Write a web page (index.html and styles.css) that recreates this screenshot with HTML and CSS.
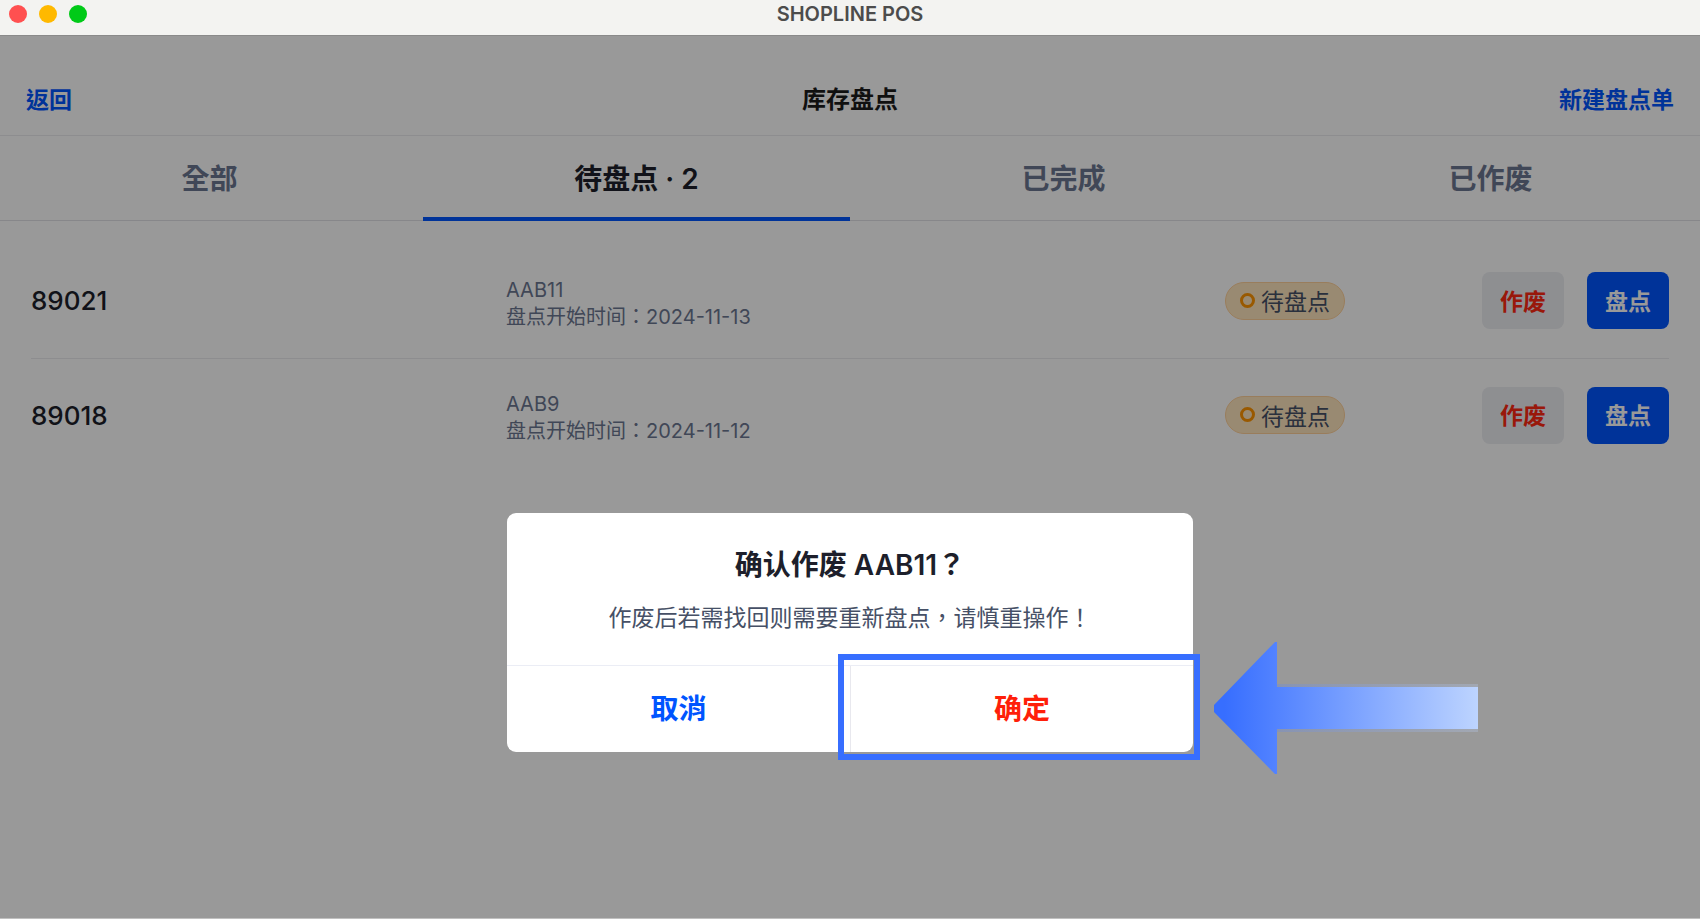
FILE: index.html
```html
<!DOCTYPE html>
<html lang="zh-Hant">
<head>
    <meta charset="UTF-8">
    <meta name="viewport" content="width=device-width, initial-scale=1.0">
    <link rel="stylesheet" href="styles.css">
    <title>SHOPLINE POS</title>
</head>
<body>
    <div class="titlebar">
        <div class="lights">
            <span class="light red"></span>
            <span class="light yellow"></span>
            <span class="light green"></span>
        </div>
        <span class="window-title">SHOPLINE POS</span>
    </div>

    <div class="app">
        <header class="header">
            <a href="#" class="header-link">返回</a>
            <h1>库存盘点</h1>
            <a href="#" class="header-link new">新建盘点单</a>
        </header>

        <nav class="tabs">
            <button type="button" class="tab">全部</button>
            <button type="button" class="tab active">待盘点 · 2</button>
            <button type="button" class="tab">已完成</button>
            <button type="button" class="tab">已作废</button>
        </nav>

        <main class="list">
            <table>
                <colgroup>
                    <col class="col-number">
                    <col>
                    <col class="col-status">
                    <col class="col-actions">
                </colgroup>
                <tr>
                    <td class="number">89021</td>
                    <td class="detail">AAB11<br>盘点开始时间：2024-11-13</td>
                    <td><span class="badge">待盘点</span></td>
                    <td>
                        <div class="actions">
                            <button type="button" class="btn btn-void">作废</button>
                            <button type="button" class="btn btn-count">盘点</button>
                        </div>
                    </td>
                </tr>
                <tr>
                    <td class="number">89018</td>
                    <td class="detail">AAB9<br>盘点开始时间：2024-11-12</td>
                    <td><span class="badge">待盘点</span></td>
                    <td>
                        <div class="actions">
                            <button type="button" class="btn btn-void">作废</button>
                            <button type="button" class="btn btn-count">盘点</button>
                        </div>
                    </td>
                </tr>
            </table>
        </main>

        <div class="overlay">
            <div class="modal" role="dialog" aria-labelledby="modal-title">
                <div class="modal-body">
                    <h2 id="modal-title">确认作废 AAB11？</h2>
                    <p>作废后若需找回则需要重新盘点，请慎重操作！</p>
                </div>
                <div class="modal-footer">
                    <button type="button" class="modal-btn cancel">取消</button>
                    <div class="confirm-wrap">
                        <button type="button" class="modal-btn confirm">确定</button>
                        <span class="highlight"></span>
                        <svg class="arrow" width="264" height="132" viewBox="0 0 264 132" aria-hidden="true">
                            <defs>
                                <linearGradient id="arrow-fill" gradientUnits="userSpaceOnUse" x1="0" y1="0" x2="264" y2="0">
                                    <stop offset="0.04" stop-color="#376eff"/>
                                    <stop offset="1" stop-color="#bdd4ff"/>
                                </linearGradient>
                            </defs>
                            <rect x="63" y="42" width="201" height="48" fill="url(#arrow-fill)" opacity="0.25"/>
                            <path d="M0 63 L61 0 H63 V45 H264 V87 H63 V132 H61 L0 70 Z" fill="url(#arrow-fill)"/>
                        </svg>
                    </div>
                </div>
            </div>
        </div>
    </div>
</body>
</html>
```
FILE: styles.css
```css
*,
*::before,
*::after {
    box-sizing: border-box;
}

body {
    margin: 0;
    min-height: 100vh;
    display: flex;
    flex-direction: column;
    font-family: Inter, "Noto Sans CJK TC", sans-serif;
    background-color: #fff;
    color: #1d1f2b;
}

button {
    font-family: inherit;
    border: none;
    padding: 0 0 2px;
    background: none;
    cursor: pointer;
}

/* window bar */
.titlebar {
    display: grid;
    grid-template-columns: 1fr auto 1fr;
    align-items: center;
    height: 35px;
    padding: 0 9px 8px;
    background-color: #f3f3f1;
}

.lights {
    display: flex;
    gap: 12px;
}

.light {
    width: 18px;
    height: 18px;
    border-radius: 50%;
}

.red {
    background-color: #ff5050;
}

.yellow {
    background-color: #ffb900;
}

.green {
    background-color: #00ca18;
}

.window-title {
    font-size: 20px;
    font-weight: 600;
    color: #4c4c4c;
}

.app {
    position: relative;
    flex: 1;
    overflow: hidden;
    border-bottom: 1px solid #c0c0c0;
}

.header {
    display: grid;
    grid-template-columns: 1fr auto 1fr;
    align-items: center;
    height: 101px;
    padding: 28px 26px 0;
    border-top: 1px solid #e6e6e6;
    border-bottom: 1px solid #ebebee;
}

.header h1 {
    margin: 0;
    font-size: 24px;
    line-height: 32px;
    color: #1c1c1c;
}

.header-link {
    font-size: 23px;
    font-weight: 600;
    line-height: 32px;
    color: #0055ff;
    text-decoration: none;
}

.header-link.new {
    justify-self: end;
}

.tabs {
    display: grid;
    grid-template-columns: repeat(4, 1fr);
    height: 85px;
    margin: 0 -4px;
    border-bottom: 1px solid #e2e2e6;
}

.tab {
    position: relative;
    font-size: 28px;
    font-weight: 600;
    color: #6c7791;
}

.tab.active {
    color: #1d1f2b;
}

.tab.active::after {
    content: "";
    position: absolute;
    left: 0;
    right: 0;
    bottom: -1px;
    height: 4px;
    background-color: #0055ff;
}

/* stocktake list */
.list {
    padding: 23px 31px 0;
}

table {
    width: 100%;
    table-layout: fixed;
    border-collapse: collapse;
}

.col-number {
    width: 29%;
}

.col-status {
    width: 200px;
}

.col-actions {
    width: 244px;
}

tr + tr {
    border-top: 1px solid #ebebee;
}

td {
    height: 114px;
    padding: 0;
}

.number {
    font-size: 26px;
    font-weight: 500;
}

.detail {
    padding-top: 6px;
    font-size: 20px;
    line-height: 27px;
    color: #6c7791;
}

.badge {
    display: inline-flex;
    align-items: center;
    gap: 6px;
    height: 38px;
    padding: 0 14px 1px;
    border: 1px solid #ffd199;
    border-radius: 19px;
    background-color: #ffe7bf;
    font-size: 23px;
    color: #465066;
}

.badge::before {
    content: "";
    width: 15px;
    height: 15px;
    border: 3px solid #ff9500;
    border-radius: 50%;
}

.actions {
    display: flex;
    justify-content: flex-end;
    gap: 23px;
}

.btn {
    width: 82px;
    height: 57px;
    border-radius: 8px;
    font-size: 23px;
    font-weight: 600;
}

.btn-void {
    background-color: #edeef2;
    color: #ff2812;
}

.btn-count {
    background-color: #0055ff;
    color: #fff;
}

/* confirm dialog */
.overlay {
    position: absolute;
    inset: 0;
    display: flex;
    align-items: center;
    justify-content: center;
    padding-top: 312px;
    background-color: rgba(0, 0, 0, 0.4);
}

.modal {
    width: 686px;
    border-radius: 9px;
    background-color: #fff;
    text-align: center;
}

.modal-body {
    padding: 32px 20px 31px;
    border-bottom: 1px solid #ebedf5;
}

.modal h2 {
    margin: 0 0 17px;
    font-size: 28px;
    font-weight: 600;
    line-height: 40px;
}

.modal p {
    margin: 0;
    font-size: 23px;
    line-height: 32px;
    color: #465066;
}

.modal-footer {
    display: grid;
    grid-template-columns: 1fr 1fr;
    height: 86px;
}

.modal-btn {
    padding-bottom: 4px;
    font-size: 28px;
    font-weight: 600;
}

.cancel {
    color: #0055ff;
}

.confirm-wrap {
    position: relative;
    display: grid;
    border-left: 1px solid #e8e8ee;
}

.confirm {
    color: #ff1f0a;
}

.highlight {
    position: absolute;
    inset: -12px -7px -8px -13px;
    border: 6px solid #376eff;
    pointer-events: none;
}

.arrow {
    position: absolute;
    left: calc(100% + 21px);
    top: -24px;
}
```
